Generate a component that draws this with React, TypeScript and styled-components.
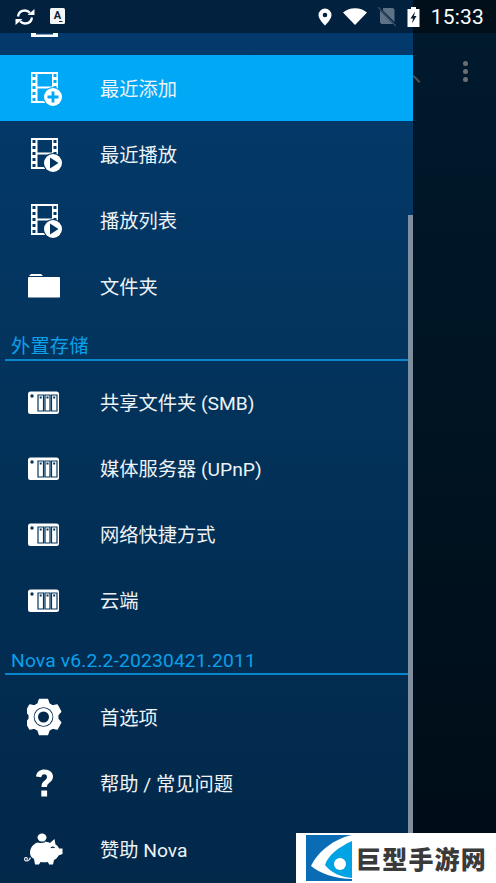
import React from 'react';
import styled, { createGlobalStyle } from 'styled-components';

const GlobalStyle = createGlobalStyle`
  html, body {
    margin: 0;
    padding: 0;
    background: #000c16;
  }
  body {
    font-family: Roboto, "Noto Sans CJK SC", sans-serif;
  }
`;

const Screen = styled.div`
  position: relative;
  width: 496px;
  height: 883px;
  overflow: hidden;
  display: flex;
  background: linear-gradient(180deg, #001a2e 0%, #00121f 60%, #000c16 100%);
`;

const StatusBar = styled.div`
  position: absolute;
  top: 0;
  left: 0;
  right: 0;
  height: 33px;
  display: flex;
  align-items: center;
  justify-content: space-between;
  padding: 0 12px 0 15px;
  background: rgba(0, 0, 0, 0.42);
  color: #fff;
  z-index: 3;
`;

const StatusGroup = styled.div<{ $gap: number }>`
  display: flex;
  align-items: center;
  gap: ${(p) => p.$gap}px;
`;

const Clock = styled.span`
  font-family: Roboto, sans-serif;
  font-size: 21px;
  letter-spacing: 0.2px;
`;

const Drawer = styled.nav`
  position: relative;
  width: 413px;
  height: 883px;
  flex: none;
  padding-top: 33px;
  box-sizing: border-box;
  overflow: hidden;
  background: linear-gradient(180deg, #033a6d 0%, #03355f 35%, #022d52 70%, #02284a 100%);
`;

const ScrollThumb = styled.div`
  position: absolute;
  right: 0;
  top: 215px;
  bottom: 0;
  width: 5px;
  background: #7f8fa0;
`;

const Row = styled.div<{ $active?: boolean; $height?: number }>`
  height: ${(p) => p.$height ?? 66}px;
  display: flex;
  align-items: center;
  background: ${(p) => (p.$active ? '#00a8f6' : 'transparent')};
  overflow: hidden;
`;

const ClippedRow = styled(Row)`
  align-items: flex-start;
`;

const IconSlot = styled.div`
  width: 100px;
  flex: none;
  display: flex;
  justify-content: flex-start;
  padding-left: 27px;
  box-sizing: border-box;
`;

const Label = styled.span`
  color: #eef3f7;
  font-size: 19.25px;
  line-height: 24px;
  padding-top: 4px;
  white-space: nowrap;
`;

const SectionHeader = styled.div<{ $after?: number }>`
  height: 42px;
  margin: 0 5px ${(p) => p.$after ?? 8}px 5px;
  padding: 16px 0 0 6px;
  box-sizing: border-box;
  border-bottom: 2px solid #0a86cc;
  color: #0aa0ea;
  font-size: 19.25px;
  letter-spacing: 0.15px;
  line-height: 24px;
  white-space: nowrap;
`;

const Backdrop = styled.div`
  position: relative;
  flex: 1;
  overflow: hidden;
`;

const SearchTail = styled.div`
  position: absolute;
  left: -1px;
  top: 78px;
  width: 9px;
  height: 2px;
  background: #4a5156;
  transform: rotate(45deg);
`;

const Dots = styled.div`
  position: absolute;
  left: 50px;
  top: 61px;
  display: flex;
  flex-direction: column;
  gap: 3px;
`;

const Dot = styled.span`
  width: 5px;
  height: 5px;
  border-radius: 50%;
  background: #6b6f73;
`;

const Watermark = styled.div`
  position: absolute;
  right: 0;
  bottom: 0;
  width: 200px;
  height: 50px;
  background: #fff;
  display: flex;
  align-items: center;
  padding-left: 10px;
  box-sizing: border-box;
  gap: 4px;
  z-index: 4;
`;

const WatermarkText = styled.span`
  font-family: "Noto Sans CJK SC", sans-serif;
  font-size: 25px;
  font-weight: 900;
  line-height: 30px;
  letter-spacing: 1.2px;
  color: #3a3a3a;
  white-space: nowrap;
`;

const PiggySvg = styled.svg`
  margin-left: -5px;
  flex: none;
`;

const filmPath =
  'M4 2h27v31H4zM5.500 4v3h3V4zM5.500 10v3h3v-3zM5.500 16v3h3v-3zM5.500 22v3h3v-3zM5.500 28v3h3v-3zM26.500 4v3h3V4zM26.500 10v3h3v-3zM26.500 16v3h3v-3zM10.500 4v12.500H25V4zM10.500 18.500V31H25V18.500z';

const FilmPlusIcon = () => (
  <svg width="36" height="36" viewBox="0 0 36 36" aria-hidden="true">
    <path fillRule="evenodd" fill="#fff" d={filmPath} />
    <circle cx="26" cy="27" r="10" fill="#00a8f6" />
    <circle cx="26" cy="27" r="9" fill="#fff" />
    <path d="M24.600 21.500h2.800v4.100h4.100v2.800h-4.100v4.100h-2.800v-4.100h-4.100v-2.800h4.100z" fill="#00a8f6" />
  </svg>
);

const FilmPlayIcon = () => (
  <svg width="36" height="36" viewBox="0 0 36 36" aria-hidden="true">
    <path fillRule="evenodd" fill="#fff" d={filmPath} />
    <circle cx="26" cy="27" r="10" fill="#03365f" />
    <circle cx="26" cy="27" r="9" fill="#fff" />
    <path d="M23 21.500l8.500 5.500-8.500 5.500z" fill="#03365f" />
  </svg>
);

const FolderIcon = () => (
  <svg width="36" height="30" viewBox="0 0 36 30" aria-hidden="true">
    <path d="M2 5 4 3h10l2 2z" fill="#fff" />
    <path d="M1.500 6h31l.5.500V26l-.5.500h-31L1 26V6.500z" fill="#fff" />
  </svg>
);

const NasIcon = () => (
  <svg width="36" height="26" viewBox="0 -1 36 26" aria-hidden="true">
    <rect x="1" y="1.500" width="31" height="22.500" rx="2.500" fill="#fff" />
    <circle cx="5" cy="6" r="1.700" fill="#03365f" />
    <path
      fill="none"
      stroke="#03365f"
      strokeWidth="1.200"
      d="M11 5h5.500v16H11zM18 5h5v16h-5zM24.500 5H30v16h-5.500z"
    />
    <path fill="#03365f" d="M12.700 6.500h2v2h-2zM19.500 6.500h2v2h-2zM26.200 6.500h2v2h-2z" />
  </svg>
);

const GearIcon = () => (
  <svg width="36" height="38" viewBox="0 0 36 38" aria-hidden="true">
    <path
      fill="#fff"
      stroke="#fff"
      strokeWidth="1.500"
      strokeLinejoin="round"
      d="M12.500 1.500h8l1.500 4.500 3.500 2 4.700-1 3.500 6.500-3 3.500v4l3 3.500-3.500 6.500-4.700-1-3.500 2-1.500 4.500h-8L11 32l-3.500-2-4.700 1L-.700 24.500l3-3.500v-4l-3-3.500L2.800 7l4.700 1L11 6z"
    />
    <circle cx="16.500" cy="19" r="9.800" fill="#02294b" />
    <circle cx="16.500" cy="19" r="9" fill="#fff" />
    <circle cx="16.500" cy="19" r="5.500" fill="#02294b" />
  </svg>
);

const HelpIcon = () => (
  <svg width="36" height="32" viewBox="0 -1.500 36 32" aria-hidden="true">
    <path
      fill="#fff"
      d="M9 8c.500-4.500 4-7 8.500-7 5 0 8.500 3 8.500 7 0 3-1.600 4.700-3.600 6.200-1.700 1.300-2.400 2.100-2.400 4.300h-5.500c0-3.500 1.100-5 3.200-6.600 1.500-1.200 2.300-2 2.300-3.500 0-1.600-1.100-2.700-2.700-2.700-1.700 0-2.800 1.100-3 3zM14.300 22h5.800v6h-5.800z"
    />
  </svg>
);

const PiggyIcon = () => (
  <PiggySvg width="46" height="36" viewBox="0 -1 46 36" aria-hidden="true">
    <ellipse cx="20" cy="5.500" rx="4.500" ry="4" fill="#fff" />
    <path
      fill="#fff"
      d="M8 21c0-7 5.500-11.500 13-11.500 3 0 5 .500 7 1.500l4.500-4 1 5.500c2 1 3 2.500 3.500 4h3.500v5.500l-4 1.500c-1 2-2.500 3.500-4.500 4.500l-1 4.500h-4l-1-2.500c-2.500.400-5 .400-7.500 0L17 32.500h-4l-1-5.500c-2.500-1.500-4-3.500-4-6z"
    />
    <path
      fill="none"
      stroke="#02284a"
      strokeWidth="1.200"
      d="M29 16c1-1.300 2.500-1.300 3.500 0M15 9.800c2.500.800 5.500.800 8 0"
    />
    <path
      fill="none"
      stroke="#dfe6ec"
      strokeWidth="1.200"
      d="M8.500 25.500c-1 2.500-2.500 3.800-4.500 3.300s-2-2.800-.300-3.200 2.300 1.300 1 2.100"
    />
  </PiggySvg>
);

const SyncIcon = () => (
  <svg width="20" height="20" viewBox="0 0 20 20" aria-hidden="true">
    <path
      fill="none"
      stroke="#fff"
      strokeWidth="2.300"
      d="M3 9.500C3.500 5.800 6.300 3.500 10 3.500c2 0 3.600.800 4.800 2.200M17 10.500c-.500 3.700-3.300 6-7 6-2 0-3.600-.800-4.800-2.200"
    />
    <path fill="#fff" d="M12.500 8h7V2zM7.500 12h-7v6z" />
  </svg>
);

const StoreIcon = () => (
  <svg width="16" height="17" viewBox="0 0 16 17" aria-hidden="true">
    <rect width="15" height="16" rx="1.500" fill="#f4f6f8" />
    <text x="7.500" y="11" textAnchor="middle" fontFamily="Roboto, sans-serif" fontWeight="700" fontSize="11" fill="#0c2238">
      A
    </text>
    <path fill="#0c2238" d="M9 13h3.500v1H9z" />
  </svg>
);

const PinIcon = () => (
  <svg width="14" height="18" viewBox="0 0 14 18" aria-hidden="true">
    <path
      fill="#fff"
      fillRule="evenodd"
      d="M7 .500a6.500 6.500 0 0 1 6.500 6.500C13.500 11.500 7 17.500 7 17.500S.5 11.500.5 7A6.500 6.500 0 0 1 7 .500zm0 4.200a2.300 2.300 0 1 0 0 4.600 2.300 2.300 0 0 0 0-4.600z"
    />
  </svg>
);

const WifiIcon = () => (
  <svg width="24" height="17" viewBox="0 0 24 17" aria-hidden="true">
    <path fill="#fff" d="M0 4.500C3.300 1.800 7.400.300 12 .300s8.700 1.500 12 4.200L12 17z" />
  </svg>
);

const NoSimIcon = () => (
  <svg width="18" height="20" viewBox="0 0 18 20" aria-hidden="true">
    <path fill="#5d7286" d="M5 1h10l1.500 1.500V15L5 3.500zM2 3.500l13 13.500H3.500L2 15.500z" />
    <path stroke="#3f5468" strokeWidth="1.200" d="M0 0l18 19" />
  </svg>
);

const BatteryIcon = () => (
  <svg width="13" height="20" viewBox="0 0 13 20" aria-hidden="true">
    <path fill="#fff" d="M4 0h5v2h3.500v18H.5V2H4z" />
    <path fill="#0a1f33" d="M8 4.500 3.500 11.500h2.500L5 16.500 9.500 9H7z" />
  </svg>
);

const LogoMark = () => (
  <svg width="46" height="46" viewBox="0 0 46 46" aria-hidden="true">
    <rect width="46" height="46" fill="#0a6cb5" />
    <path d="M46 0C28 4 12 16 5 31c8 7 25 13 41 13z" fill="#fff" />
    <path d="M46 6C33 12 22 20 19 30c6 8 16 12 27 13z" fill="#00a3e4" />
    <circle cx="34" cy="29" r="6" fill="#fff" />
  </svg>
);

export default function App() {
  return (
    <Screen>
      <GlobalStyle />
      <StatusBar>
        <StatusGroup $gap={15}>
          <SyncIcon />
          <StoreIcon />
        </StatusGroup>
        <StatusGroup $gap={11}>
          <PinIcon />
          <WifiIcon />
          <NoSimIcon />
          <BatteryIcon />
          <Clock>15:33</Clock>
        </StatusGroup>
      </StatusBar>

      <Drawer>
        <ClippedRow $height={22}>
          <IconSlot>
            <svg width="36" height="4" viewBox="0 0 36 4" aria-hidden="true">
              <path fill="#fff" d="M4 0h5v1.500h17V0h5v4H4z" />
            </svg>
          </IconSlot>
        </ClippedRow>
        <Row $active>
          <IconSlot>
            <FilmPlusIcon />
          </IconSlot>
          <Label>最近添加</Label>
        </Row>
        <Row>
          <IconSlot>
            <FilmPlayIcon />
          </IconSlot>
          <Label>最近播放</Label>
        </Row>
        <Row>
          <IconSlot>
            <FilmPlayIcon />
          </IconSlot>
          <Label>播放列表</Label>
        </Row>
        <Row>
          <IconSlot>
            <FolderIcon />
          </IconSlot>
          <Label>文件夹</Label>
        </Row>

        <SectionHeader>外置存储</SectionHeader>
        <Row>
          <IconSlot>
            <NasIcon />
          </IconSlot>
          <Label>共享文件夹 (SMB)</Label>
        </Row>
        <Row>
          <IconSlot>
            <NasIcon />
          </IconSlot>
          <Label>媒体服务器 (UPnP)</Label>
        </Row>
        <Row>
          <IconSlot>
            <NasIcon />
          </IconSlot>
          <Label>网络快捷方式</Label>
        </Row>
        <Row>
          <IconSlot>
            <NasIcon />
          </IconSlot>
          <Label>云端</Label>
        </Row>

        <SectionHeader $after={9}>Nova v6.2.2-20230421.2011</SectionHeader>
        <Row>
          <IconSlot>
            <GearIcon />
          </IconSlot>
          <Label>首选项</Label>
        </Row>
        <Row>
          <IconSlot>
            <HelpIcon />
          </IconSlot>
          <Label>帮助 / 常见问题</Label>
        </Row>
        <Row>
          <IconSlot>
            <PiggyIcon />
          </IconSlot>
          <Label>赞助 Nova</Label>
        </Row>
        <ScrollThumb />
      </Drawer>

      <Backdrop>
        <SearchTail />
        <Dots>
          <Dot />
          <Dot />
          <Dot />
        </Dots>
      </Backdrop>

      <Watermark>
        <LogoMark />
        <WatermarkText>巨型手游网</WatermarkText>
      </Watermark>
    </Screen>
  );
}
